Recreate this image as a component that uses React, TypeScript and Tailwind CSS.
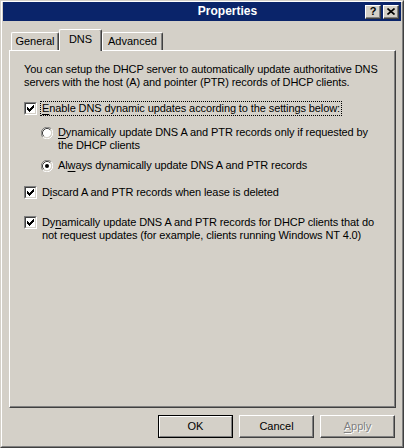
import type { ReactNode } from 'react'

const FONT = "font-['Liberation_Sans',Arial,sans-serif]"

function CheckMark() {
  // classic 7x7 tick
  const px: [number, number][] = [
    [6, 0], [5, 1], [6, 1], [0, 2], [4, 2], [5, 2], [6, 2],
    [0, 3], [1, 3], [3, 3], [4, 3], [5, 3],
    [0, 4], [1, 4], [2, 4], [3, 4], [4, 4],
    [1, 5], [2, 5], [3, 5], [2, 6],
  ]
  return (
    <svg width="7" height="7" viewBox="0 0 7 7" shapeRendering="crispEdges">
      {px.map(([x, y]) => <rect key={`${x}-${y}`} x={x} y={y} width="1" height="1" fill="#000" />)}
    </svg>
  )
}

function Checkbox({ checked }: { checked?: boolean }) {
  return (
    <div className="w-[13px] h-[13px] shrink-0 border border-t-[#808080] border-l-[#808080] border-r-white border-b-white">
      <div className="w-full h-full bg-white border border-t-[#404040] border-l-[#404040] border-r-[#d4d0c8] border-b-[#d4d0c8] flex items-center justify-center">
        {checked && <CheckMark />}
      </div>
    </div>
  )
}

function Radio({ checked }: { checked?: boolean }) {
  return (
    <svg width="12" height="12" viewBox="0 0 12 12" className="shrink-0">
      <path d="M1.76 10.24 A6 6 0 0 1 10.24 1.76" fill="none" stroke="#808080" strokeWidth="1" />
      <path d="M10.24 1.76 A6 6 0 0 1 1.76 10.24" fill="none" stroke="#fff" strokeWidth="1" />
      <circle cx="6" cy="6" r="4.5" fill="#fff" />
      <path d="M2.82 9.18 A4.5 4.5 0 0 1 9.18 2.82" fill="none" stroke="#404040" strokeWidth="1" />
      <path d="M9.18 2.82 A4.5 4.5 0 0 1 2.82 9.18" fill="none" stroke="#d4d0c8" strokeWidth="1" />
      {checked && <circle cx="6" cy="6" r="2" fill="#000" />}
    </svg>
  )
}

function U({ children }: { children: ReactNode }) {
  return <span className="underline underline-offset-[2px]">{children}</span>
}

function CaptionButton({ children }: { children: ReactNode }) {
  return (
    <div className="w-[16px] h-[14px] bg-[#d4d0c8] border border-t-white border-l-white border-r-[#404040] border-b-[#404040] shadow-[inset_-1px_-1px_#808080] flex items-center justify-center">
      {children}
    </div>
  )
}

function Tab({ label, selected, w }: { label: string; selected?: boolean; w: string }) {
  return (
    <div
      className={[
        'flex items-center justify-center bg-[#d4d0c8] border-l border-t border-r border-l-white border-t-white border-r-[#404040] rounded-t-[2px] shadow-[inset_-1px_0_#808080]',
        selected ? 'h-[22px] -mb-px relative z-10 pb-[3px]' : 'h-[18px]',
        w,
      ].join(' ')}
    >
      {label}
    </div>
  )
}

function PushButton({ children, primary, disabled }: { children: ReactNode; primary?: boolean; disabled?: boolean }) {
  return primary ? (
    <div className="w-[75px] h-[23px] border border-black">
      <div className="w-full h-full border border-t-white border-l-white border-r-[#808080] border-b-[#808080] flex items-center justify-center">
        {children}
      </div>
    </div>
  ) : (
    <div
      className={[
        'w-[75px] h-[23px] border border-t-white border-l-white border-r-[#404040] border-b-[#404040] shadow-[inset_-1px_-1px_#808080] flex items-center justify-center',
        disabled ? 'text-[#808080] [text-shadow:1px_1px_#fff]' : '',
      ].join(' ')}
    >
      {children}
    </div>
  )
}

export default function App() {
  return (
    <div className={`w-[404px] h-[448px] bg-[#d4d0c8] border border-t-[#d4d0c8] border-l-[#d4d0c8] border-r-[#404040] border-b-[#404040] ${FONT} text-[11px] leading-[13px] text-black`}>
      <div className="h-full border border-t-white border-l-white border-r-[#808080] border-b-[#808080] flex flex-col px-px">
        {/* title bar */}
        <div className="h-[19px] bg-[#0a246a] flex items-center shrink-0">
          <div className="flex-1 text-center pl-[87px] text-white font-bold text-[12px] whitespace-nowrap">Properties</div>
          <div className="flex items-center gap-[2px] pr-[2px]">
            <CaptionButton><span className="font-bold text-[11px] leading-none">?</span></CaptionButton>
            <CaptionButton>
              <svg width="8" height="7" viewBox="0 0 8 7">
                <path d="M0.5 0.5 L7.5 6.5 M7.5 0.5 L0.5 6.5" stroke="#000" strokeWidth="1.6" />
              </svg>
            </CaptionButton>
          </div>
        </div>

        <div className="flex-1 flex flex-col pl-[6px] pr-[5px]">
          {/* tabs */}
          <div className="h-[21px] mt-[8px] flex items-end pl-[2px] shrink-0">
            <Tab label="General" w="w-[48px]" />
            <Tab label="DNS" selected w="w-[43px]" />
            <Tab label="Advanced" w="w-[61px]" />
          </div>

          {/* panel */}
          <div className="h-[358px] border border-t-white border-l-white border-r-[#404040] border-b-[#404040] shadow-[inset_-1px_-1px_#808080] pl-[14px] pt-[12px] whitespace-nowrap tracking-[-0.1px]">
            <p>
              You can setup the DHCP server to automatically update authoritative DNS
              <br />
              servers with the host (A) and pointer (PTR) records of DHCP clients.
            </p>

            <div className="flex items-center mt-[13px] h-[13px]">
              <Checkbox checked />
              <span className="ml-[4px] px-px outline outline-1 outline-dotted outline-black">
                <U>E</U>nable DNS dynamic updates according to the settings below:
              </span>
            </div>

            <div className="ml-[17px]">
              <div className="flex items-start mt-[11px]">
                <div className="pt-[1px]"><Radio /></div>
                <span className="ml-[5px]">
                  <U>D</U>ynamically update DNS A and PTR records only if requested by
                  <br />
                  the DHCP clients
                </span>
              </div>
              <div className="flex items-start mt-[7px]">
                <div className="pt-[1px]"><Radio checked /></div>
                <span className="ml-[5px]">
                  Al<U>w</U>ays dynamically update DNS A and PTR records
                </span>
              </div>
            </div>

            <div className="flex items-center mt-[14px] h-[13px]">
              <Checkbox checked />
              <span className="ml-[5px]">
                D<U>i</U>scard A and PTR records when lease is deleted
              </span>
            </div>

            <div className="flex items-start mt-[17px]">
              <Checkbox checked />
              <span className="ml-[5px]">
                Dy<U>n</U>amically update DNS A and PTR records for DHCP clients that do
                <br />
                not request updates (for example, clients running Windows NT 4.0)
              </span>
            </div>
          </div>

          {/* buttons */}
          <div className="flex justify-end gap-[6px] mt-[7px] pr-px">
            <PushButton primary>OK</PushButton>
            <PushButton>Cancel</PushButton>
            <PushButton disabled><U>A</U>pply</PushButton>
          </div>
        </div>
      </div>
    </div>
  )
}
